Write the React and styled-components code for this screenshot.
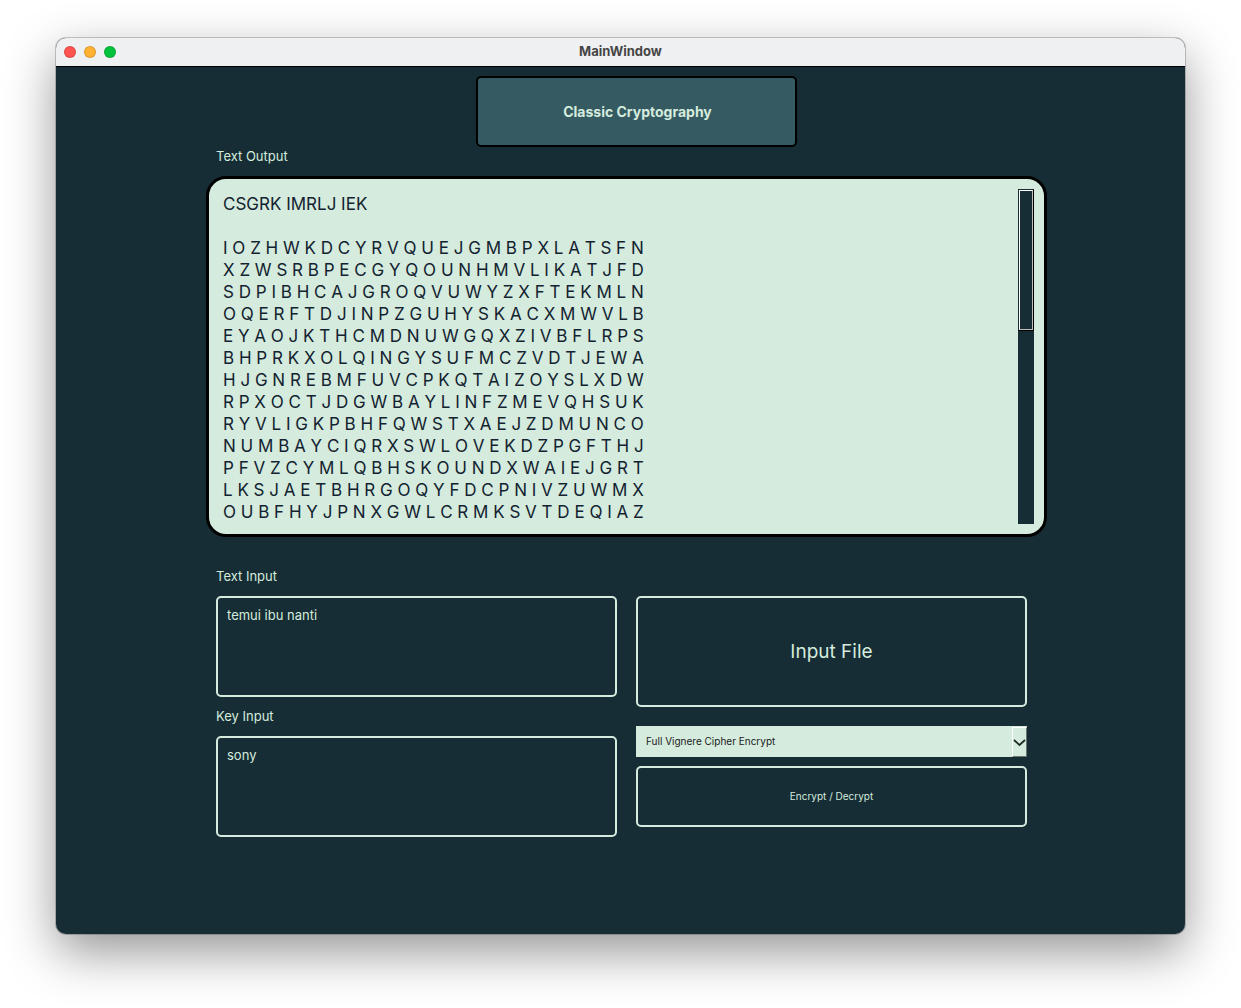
import React from "react";
import styled, { createGlobalStyle } from "styled-components";

const ink = "#162d35";
const mint = "#d4ebdd";

const GlobalStyle = createGlobalStyle`
  *, *::before, *::after { box-sizing: border-box; }
  body { margin: 0; background: #fff; }
  body, button, textarea, select {
    font-family: Inter, "Liberation Sans", sans-serif;
  }
`;

const Desktop = styled.div`
  display: flex;
  min-height: 100vh;
  padding: 38px 56px 74px;
`;

const Window = styled.main`
  flex: 1;
  display: flex;
  flex-direction: column;
  min-width: 0;
  border-radius: 10px;
  overflow: hidden;
  background: ${ink};
  box-shadow: 0 0 0 1px rgba(0, 0, 0, 0.2), 0 18px 50px rgba(0, 0, 0, 0.42);
`;

const TitleBar = styled.header`
  display: grid;
  grid-template-columns: 1fr auto 1fr;
  align-items: center;
  height: 29px;
  padding: 0 8px;
  background: #eff0f2;
  border-bottom: 1px solid #000;
`;

const Lights = styled.div`
  display: flex;
  gap: 8px;
`;

const Light = styled.button`
  width: 12px;
  height: 12px;
  padding: 0;
  border: 1px solid rgba(0, 0, 0, 0.14);
  border-radius: 50%;
  background: ${(p) => p.$color};
`;

const WindowTitle = styled.span`
  padding-bottom: 2px;
  font-size: 13px;
  line-height: 16px;
  font-weight: 700;
  color: #454545;
`;

const Content = styled.div`
  display: flex;
  flex-direction: column;
  padding: 9px 138px 40px 150px;
`;

const BannerRow = styled.div`
  display: flex;
  justify-content: center;
  padding-left: 20px;
`;

const Banner = styled.h1`
  display: flex;
  align-items: center;
  justify-content: center;
  width: 321px;
  height: 71px;
  margin: 0;
  padding-left: 2px;
  border: 2px solid #000;
  border-radius: 5px;
  background: #355a62;
  color: ${mint};
  font-size: 14px;
  font-weight: 700;
`;

const Label = styled.label`
  display: block;
  margin-bottom: 11px;
  color: ${mint};
  font-size: 13px;
  line-height: 18px;
`;

const OutputSection = styled.section`
  ${Label} { margin-left: 10px; }
`;

const OutputFrame = styled.div`
  display: flex;
  height: 361px;
  padding: 10px;
  border: 3px solid #000;
  border-radius: 20px;
  background: ${mint};
`;

const OutputText = styled.textarea`
  flex: 1;
  min-width: 0;
  padding: 4px;
  border: 0;
  outline: 0;
  resize: none;
  overflow: hidden;
  background: transparent;
  color: #132230;
  font-size: 17px;
  line-height: 22px;
`;

const ScrollTrack = styled.div`
  width: 16px;
  background: ${ink};
`;

const ScrollThumb = styled.div`
  height: 142px;
  border: 1px solid;
  border-color: ${ink} #000 #000 ${ink};
  &::before {
    content: "";
    display: block;
    height: 100%;
    border: 1px solid;
    border-color: #fff #bfbfbf #bfbfbf #fff;
  }
`;

const Form = styled.form`
  display: grid;
  grid-template-columns: 401fr 391fr;
  column-gap: 19px;
  margin-top: 30px;
  padding: 0 20px 0 10px;
`;

const Fields = styled.div`
  display: flex;
  flex-direction: column;
  gap: 10px;
`;

const Actions = styled.div`
  display: flex;
  flex-direction: column;
  padding-top: 29px;
`;

const Entry = styled.textarea`
  display: block;
  width: 100%;
  height: 101px;
  padding: 9px;
  border: 2px solid ${mint};
  border-radius: 5px;
  outline: 0;
  resize: none;
  background: transparent;
  color: ${mint};
  font-size: 13px;
  line-height: 16px;
`;

const ActionButton = styled.button`
  height: ${(p) => (p.$large ? 111 : 61)}px;
  padding: ${(p) => (p.$large ? 0 : "0 0 2px")};
  border: 2px solid ${mint};
  border-radius: 5px;
  background: transparent;
  color: ${mint};
  font-size: ${(p) => (p.$large ? 19 : 10)}px;
`;

const SelectBox = styled.div`
  display: grid;
  margin: 19px 0 9px;
  > * { grid-area: 1 / 1; }
`;

const CipherSelect = styled.select`
  appearance: none;
  width: 100%;
  height: 31px;
  padding: 0 24px 2px 10px;
  border: 0;
  border-radius: 0;
  outline: 0;
  background: ${mint};
  color: #202020;
  font-size: 10px;
`;

const SelectArrow = styled.span`
  display: flex;
  align-items: center;
  justify-content: center;
  justify-self: end;
  width: 15px;
  margin-top: 1px;
  border: 1px solid;
  border-color: #fff #6a756e #6a756e #fff;
  background: ${mint};
  pointer-events: none;
`;

const outputLines = [
  "CSGRK IMRLJ IEK",
  "",
  "I O Z H W K D C Y R V Q U E J G M B P X L A T S F N",
  "X Z W S R B P E C G Y Q O U N H M V L I K A T J F D",
  "S D P I B H C A J G R O Q V U W Y Z X F T E K M L N",
  "O Q E R F T D J I N P Z G U H Y S K A C X M W V L B",
  "E Y A O J K T H C M D N U W G Q X Z I V B F L R P S",
  "B H P R K X O L Q I N G Y S U F M C Z V D T J E W A",
  "H J G N R E B M F U V C P K Q T A I Z O Y S L X D W",
  "R P X O C T J D G W B A Y L I N F Z M E V Q H S U K",
  "R Y V L I G K P B H F Q W S T X A E J Z D M U N C O",
  "N U M B A Y C I Q R X S W L O V E K D Z P G F T H J",
  "P F V Z C Y M L Q B H S K O U N D X W A I E J G R T",
  "L K S J A E T B H R G O Q Y F D C P N I V Z U W M X",
  "O U B F H Y J P N X G W L C R M K S V T D E Q I A Z",
].join("\n");

export default function App() {
  return (
    <>
      <GlobalStyle />
      <Desktop>
        <Window>
          <TitleBar>
            <Lights>
              <Light $color="#ff5350" aria-label="Close" />
              <Light $color="#ffb132" aria-label="Minimize" />
              <Light $color="#00c23b" aria-label="Zoom" />
            </Lights>
            <WindowTitle>MainWindow</WindowTitle>
          </TitleBar>
          <Content>
            <BannerRow>
              <Banner>Classic Cryptography</Banner>
            </BannerRow>
            <OutputSection>
              <Label htmlFor="output">Text Output</Label>
              <OutputFrame>
                <OutputText id="output" readOnly value={outputLines} />
                <ScrollTrack>
                  <ScrollThumb />
                </ScrollTrack>
              </OutputFrame>
            </OutputSection>
            <Form onSubmit={(e) => e.preventDefault()}>
              <Fields>
                <div>
                  <Label htmlFor="message">Text Input</Label>
                  <Entry id="message" spellCheck={false} defaultValue="temui ibu nanti" />
                </div>
                <div>
                  <Label htmlFor="key">Key Input</Label>
                  <Entry id="key" spellCheck={false} defaultValue="sony" />
                </div>
              </Fields>
              <Actions>
                <ActionButton type="button" $large>Input File</ActionButton>
                <SelectBox>
                  <CipherSelect aria-label="Cipher" defaultValue="full">
                    <option value="full">Full Vignere Cipher Encrypt</option>
                  </CipherSelect>
                  <SelectArrow>
                    <svg width="13" height="9" viewBox="0 0 13 9" fill="none" aria-hidden="true">
                      <path d="M1 2 L6.5 7 L12 2" stroke="#1c2a24" strokeWidth="1.7" />
                    </svg>
                  </SelectArrow>
                </SelectBox>
                <ActionButton type="submit">Encrypt / Decrypt</ActionButton>
              </Actions>
            </Form>
          </Content>
        </Window>
      </Desktop>
    </>
  );
}
